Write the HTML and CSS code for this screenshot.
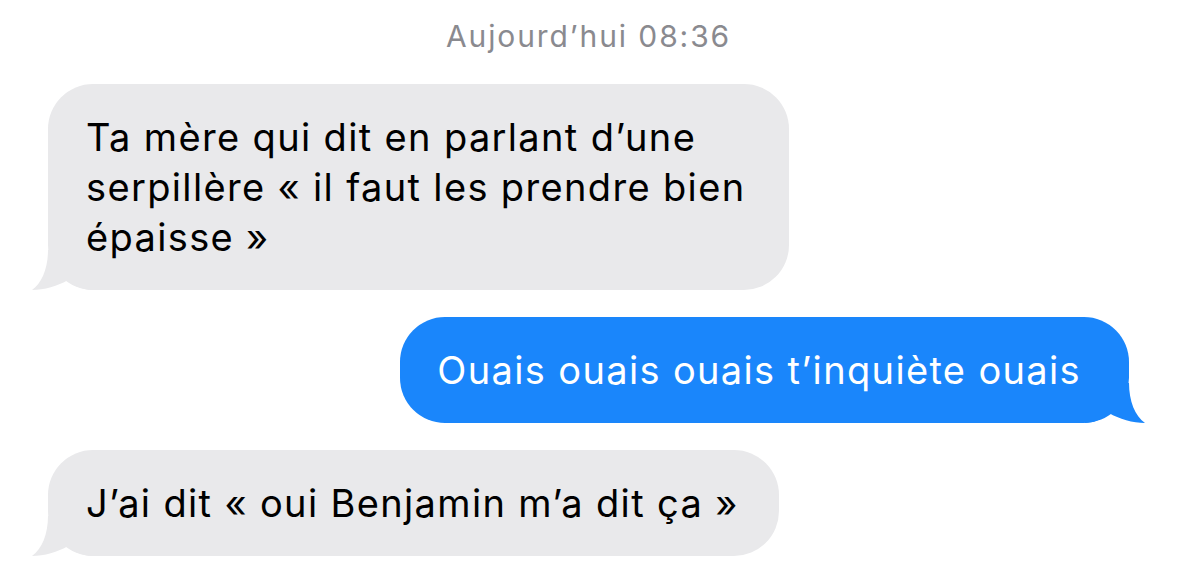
FILE: index.html
```html
<!DOCTYPE html>
<html lang="fr">

<head>
  <meta charset="UTF-8">
  <meta name="viewport" content="width=device-width, initial-scale=1.0">
  <title>Messages</title>
  <link rel="stylesheet" href="styles.css">
</head>

<body>
  <div class="thread">
    <div class="stamp">Aujourd’hui 08:36</div>

    <div class="bubble them">
      Ta mère qui dit en parlant d’une serpillère « il faut les prendre bien épaisse »
      <svg class="tail" viewBox="0 0 60 40" aria-hidden="true">
        <path d="M16 0 C16 18 10 33 0 40 C12 40 26 36 36 30 C42 36 52 40 60 40 L60 0 Z" />
      </svg>
    </div>

    <div class="bubble me">
      Ouais ouais ouais t’inquiète ouais
      <svg class="tail" viewBox="0 0 60 40" aria-hidden="true">
        <path d="M16 0 C16 18 10 33 0 40 C12 40 26 36 36 30 C42 36 52 40 60 40 L60 0 Z" />
      </svg>
    </div>

    <div class="bubble them">
      J’ai dit « oui Benjamin m’a dit ça »
      <svg class="tail" viewBox="0 0 60 40" aria-hidden="true">
        <path d="M16 0 C16 18 10 33 0 40 C12 40 26 36 36 30 C42 36 52 40 60 40 L60 0 Z" />
      </svg>
    </div>
  </div>
</body>

</html>
```

FILE: styles.css
```css
body {
  margin: 0;
  background-color: #fff;
  font-family: Inter, "Liberation Sans", sans-serif;
}

.thread {
  display: flex;
  flex-direction: column;
  gap: 27px;
  padding: 18px 50px 0 48px;
}

.stamp {
  text-align: center;
  font-size: 30px;
  line-height: 36px;
  letter-spacing: 1.9px;
  color: #8a8a8f; /* iOS secondary gray */
  margin-bottom: 3px;
}

.bubble {
  position: relative;
  box-sizing: border-box;
  max-width: 741px;
  padding: 28px 40px 28px 38px;
  border-radius: 45px;
  font-size: 38px;
  line-height: 50px;
  letter-spacing: 1.35px;
}

.bubble .tail {
  position: absolute;
  bottom: 0;
  width: 60px;
  height: 40px;
}

/* incoming, left aligned */
.them {
  align-self: flex-start;
  background-color: #e9e9eb;
  color: #000;
}

.them .tail {
  left: -16px;
  fill: #e9e9eb;
}

/* outgoing, right aligned */
.me {
  align-self: flex-end;
  max-width: 760px;
  padding: 28px 48px 28px 37px;
  background-color: #1a86fb;
  color: #fff;
}

.me .tail {
  right: -16px;
  fill: #1a86fb;
  transform: scaleX(-1);
}
```
